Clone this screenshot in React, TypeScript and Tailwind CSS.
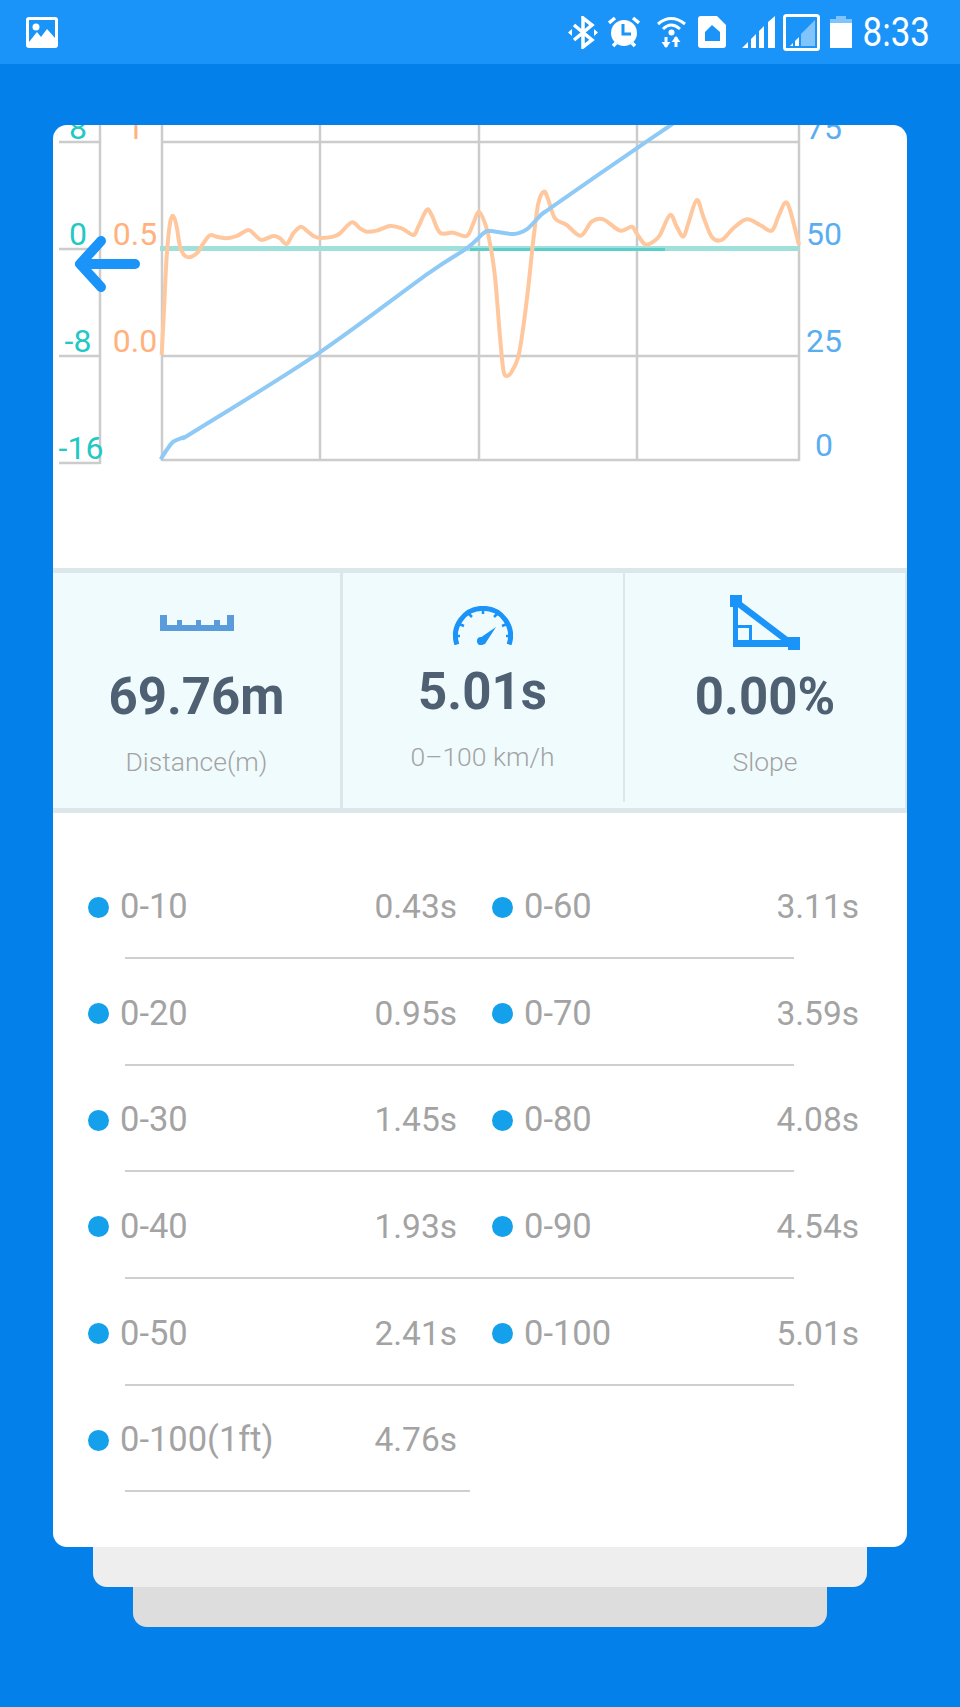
import React from "react";

const BLUE = "#1a94f8";

const rows = [
  [{ label: "0-10", value: "0.43s" }, { label: "0-60", value: "3.11s" }],
  [{ label: "0-20", value: "0.95s" }, { label: "0-70", value: "3.59s" }],
  [{ label: "0-30", value: "1.45s" }, { label: "0-80", value: "4.08s" }],
  [{ label: "0-40", value: "1.93s" }, { label: "0-90", value: "4.54s" }],
  [{ label: "0-50", value: "2.41s" }, { label: "0-100", value: "5.01s" }],
  [{ label: "0-100(1ft)", value: "4.76s" }],
];

// curve points read off the chart, [x, y] in page pixels
const orange: number[][] = [
  [365, 735], [372, 600], [380, 440], [390, 340], [400, 318], [410, 350], [420, 410], [432, 435],
  [445, 442], [460, 437], [475, 425], [490, 400], [510, 376], [530, 380], [560, 385], [590, 378],
  [625, 360], [645, 375], [665, 390], [700, 378], [720, 385], [740, 402], [760, 370], [782, 350],
  [800, 362], [820, 378], [840, 384], [880, 380], [900, 370], [935, 337], [960, 355], [980, 365],
  [1010, 362], [1050, 348], [1085, 355], [1120, 375], [1135, 350], [1160, 300], [1175, 315],
  [1200, 368], [1240, 368], [1280, 378], [1300, 340],
].map(([x, y]) => [40 + x / 3, 110 + y / 3]).concat(
  [
    [56, 305], [75, 340], [90, 400], [105, 500], [120, 680], [130, 780], [140, 798], [155, 785],
    [175, 740], [190, 650], [205, 530], [220, 390], [235, 280], [252, 245], [265, 270], [285, 325],
    [320, 345], [362, 377], [395, 335], [430, 328], [480, 362], [515, 350], [530, 370], [555, 403],
    [580, 395], [600, 375], [630, 315], [650, 350], [670, 380], [685, 340], [710, 270], [730, 320],
    [755, 380], [785, 390], [820, 355], [860, 328], [900, 345], [935, 362], [955, 320], [975, 278],
    [990, 300], [1017, 405],
  ].map(([x, y]) => [460 + x / 3, 110 + y / 3])
);

const blue: number[][] = [
  [362, 1048], [380, 1020], [400, 995], [430, 982], [470, 960], [835, 730], [1165, 490], [1280, 415],
  [1330, 370],
].map(([x, y]) => [40 + x / 3, 110 + y / 3]).concat(
  [
    [90, 363], [160, 372], [200, 358], [240, 318], [270, 295], [530, 115], [640, 40], [670, 18],
  ].map(([x, y]) => [460 + x / 3, 110 + y / 3])
);

function smooth(pts: number[][]) {
  let d = `M${pts[0][0]} ${pts[0][1]}`;
  for (let i = 0; i < pts.length - 1; i++) {
    const p0 = pts[i - 1] || pts[i];
    const p1 = pts[i];
    const p2 = pts[i + 1];
    const p3 = pts[i + 2] || p2;
    const c1x = p1[0] + (p2[0] - p0[0]) / 6;
    const c1y = p1[1] + (p2[1] - p0[1]) / 6;
    const c2x = p2[0] - (p3[0] - p1[0]) / 6;
    const c2y = p2[1] - (p3[1] - p1[1]) / 6;
    d += ` C${c1x} ${c1y} ${c2x} ${c2y} ${p2[0]} ${p2[1]}`;
  }
  return d;
}

function Chart() {
  const grid = "#cccccc";
  return (
    <svg viewBox="53 125 854 443" className="block h-[443px] w-[854px]" style={{ fontFamily: "Roboto, sans-serif" }}>
      {/* axes and grid */}
      <g stroke={grid} strokeWidth="2.5" fill="none">
        <path d="M100 125V464M59 142H100M59 249H100M59 356H100M59 463H100" />
        <path d="M162 125V461M320 125V461M479 125V461M637 125V461M799 125V461" />
        <path d="M162 142H799M162 249H799M162 356H799M162 460H799" />
      </g>

      <g fontSize="32" textAnchor="middle" fill="#22c8c4">
        <text x="78" y="139">8</text>
        <text x="78" y="245">0</text>
        <text x="78" y="352">-8</text>
        <text x="81" y="459">-16</text>
      </g>
      <g fontSize="32" textAnchor="middle" fill="#ffb27d">
        <text x="135" y="139">1</text>
        <text x="135" y="245">0.5</text>
        <text x="135" y="352">0.0</text>
      </g>
      <g fontSize="32" textAnchor="middle" fill="#5aaef0">
        <text x="824" y="139">75</text>
        <text x="824" y="245">50</text>
        <text x="824" y="352">25</text>
        <text x="824" y="456">0</text>
      </g>

      {/* curves */}
      <path d="M160 248.5H799" stroke="#9fe0da" strokeWidth="5" fill="none" />
      <path d="M470 249.5H665" stroke="#5ccfcd" strokeWidth="3" fill="none" />
      <path d={smooth(orange)} stroke="#ffc79e" strokeWidth="4" fill="none" strokeLinejoin="round" />
      <path d={smooth(blue)} stroke="#8ecaf5" strokeWidth="4" fill="none" strokeLinejoin="round" />
    </svg>
  );
}

function BackArrow() {
  return (
    <svg viewBox="0 0 66 56" className="absolute left-[22px] top-[111px] h-[56px] w-[66px]" fill="none" stroke={BLUE} strokeWidth="10" strokeLinecap="round" strokeLinejoin="round">
      <path d="M26 5L5 28L26 51" />
      <path d="M7 28H60" />
    </svg>
  );
}

function RulerIcon() {
  return (
    <svg viewBox="0 0 74 16" className="block h-[16px] w-[74px]" fill="#5a9bdc">
      <path d="M0 0H7V10H17V5H22V10H36V5H41V10H54V5H60V10H67V0H74V16H0Z" />
    </svg>
  );
}

function GaugeIcon() {
  return (
    <svg viewBox="0 0 60 39" className="block h-[39px] w-[60px]" fill="none" stroke={BLUE} strokeWidth="2.5">
      <path d="M3.9 38.5A27.5 27.5 0 1 1 56.1 38.5" strokeWidth="5" />
      <path d="M2 30H7M6 18L11 20M15 7L19 11M30 3V8M45 7L41 11M54 18L49 20M58 30H53" />
      <path d="M43 21L32 38L26 39L24 34Z" fill={BLUE} stroke="none" />
      <circle cx="28" cy="35" r="4" fill={BLUE} stroke="none" />
    </svg>
  );
}

function SlopeIcon() {
  return (
    <svg viewBox="0 0 70 55" className="block h-[55px] w-[70px]" fill={BLUE}>
      <rect x="0" y="0" width="12" height="12" />
      <rect x="58" y="42" width="12" height="13" />
      <rect x="3" y="8" width="5" height="44" />
      <rect x="3" y="45" width="58" height="7" />
      <path d="M9 5L63 46L59 51L5 10Z" />
      <path d="M7 30H22V45H19V33H7Z" />
    </svg>
  );
}

function Cell({ label, value, first }: { label: string; value: string; first: boolean }) {
  return (
    <div className={`flex items-center text-[#a3a3a3] ${first ? "w-[369px]" : "w-[367px]"}`}>
      <span className="h-[21px] w-[21px] shrink-0 rounded-full bg-[#14a0ea]" />
      <span className="ml-[11px] text-[34.5px]">{label}</span>
      <span className="ml-auto text-[33.5px]">{value}</span>
    </div>
  );
}

function StatusBar() {
  return (
    <div className="flex h-[64px] items-center bg-[#1a94f8] pl-[26px] pr-[30px]">
      <svg viewBox="0 0 32 31" className="h-[31px] w-[32px]">
        <rect width="32" height="31" rx="3" fill="#fff" />
        <rect x="3" y="3" width="26" height="25" fill={BLUE} />
        <circle cx="10" cy="10" r="3.5" fill="#fff" />
        <path d="M3 25L11 15L15 20L21 12L29 21V28H3Z" fill="#fff" />
      </svg>

      <svg viewBox="0 0 30 33" className="ml-auto h-[33px] w-[30px]" fill="none" stroke="#fff" strokeWidth="3.5">
        <path d="M6 9L24 24L15 31V2L24 9L6 24" />
        <path d="M0 16.5L4 13V20Z M30 16.5L26 13V20Z" fill="#fff" stroke="none" />
      </svg>

      <svg viewBox="0 0 32 32" className="ml-[10px] h-[32px] w-[32px]">
        <circle cx="16" cy="17" r="13" fill="#fff" />
        <path d="M15 8V18H23" stroke={BLUE} strokeWidth="3" fill="none" />
        <path d="M1 7L7 2M31 7L25 2M5 30L8 27M27 30L24 27" stroke="#fff" strokeWidth="3.5" fill="none" />
      </svg>

      <svg viewBox="0 0 29 33" className="ml-[17px] h-[33px] w-[29px]" fill="none" stroke="#fff" strokeWidth="3">
        <path d="M1 8Q14 -3 28 8M6 13Q14 5 23 13" />
        <circle cx="14.5" cy="16.5" r="3" fill="#fff" stroke="none" />
        <path d="M9 21V31M19 21V31" />
        <path d="M4.5 26H13.5L9 32Z M14.5 26H23.5L19 20Z" fill="#fff" stroke="none" />
      </svg>

      <svg viewBox="0 0 28 32" className="ml-[12px] h-[32px] w-[28px]">
        <path d="M3 0H19L28 9V29Q28 32 25 32H3Q0 32 0 29V3Q0 0 3 0Z" fill="#fff" />
        <path d="M14 9L22 16V25H7V16Z" fill={BLUE} />
      </svg>

      <svg viewBox="0 0 33 32" className="ml-[16px] h-[32px] w-[33px]" fill="#fff">
        <path d="M0 32L6 26V32ZM9 23L14 18V32H9ZM17 15L22 10V32H17ZM26 6L33 0V32H26Z" />
      </svg>

      <svg viewBox="0 0 37 37" className="ml-[8px] h-[37px] w-[37px]">
        <rect x="1.5" y="1.5" width="34" height="34" rx="2" fill="none" stroke="#fff" strokeWidth="3" />
        <path d="M18 20L32 6V32H18Z" fill="#fff" fillOpacity="0.45" />
        <path d="M7 32L10 29V32ZM12 27L16 23V32H12Z" fill="#fff" />
      </svg>

      <svg viewBox="0 0 22 32" className="ml-[10px] h-[32px] w-[22px]">
        <path d="M6 0H16V3H22V7H0V3H6Z" fill="#fff" fillOpacity="0.45" />
        <rect x="0" y="7" width="22" height="25" fill="#fff" />
      </svg>

      <span className="ml-[11px] scale-y-[1.15] text-[35px] font-normal leading-none text-white">8:33</span>
    </div>
  );
}

function Stats() {
  const valueCls = "text-[51px] font-bold leading-[60px] text-[#4f6073]";
  const labelCls = "mt-[17px] text-[26.5px] font-light leading-[36px] text-[#a3a3a3]";
  return (
    <div className="flex h-[245px] border-y-[5px] border-[#dce7ec] bg-[#f0fbfd]">
      <div className="flex w-[290px] flex-col items-center border-r-[3px] border-[#dce7ec] pt-[42px]">
        <RulerIcon />
        <div className={`mt-[36px] ${valueCls}`}>69.76m</div>
        <div className={labelCls}>Distance(m)</div>
      </div>
      <div className="relative flex w-[282px] flex-col items-center pr-[3px] pt-[33px]">
        <GaugeIcon />
        <div className={`mt-[17px] ${valueCls}`}>5.01s</div>
        <div className={labelCls}>0–100 km/h</div>
        <span className="absolute right-0 top-0 h-[229px] w-[2px] bg-[#dce7ec]" />
      </div>
      <div className="flex flex-1 flex-col items-center border-r-[2px] border-[#dce7ec] pt-[22px]">
        <SlopeIcon />
        <div className={`mt-[17px] ${valueCls}`}>0.00%</div>
        <div className={labelCls}>Slope</div>
      </div>
    </div>
  );
}

export default function App() {
  return (
    <div className="min-h-[1707px] bg-[#0480ea] [font-family:Roboto,sans-serif]">
      <StatusBar />

      <div className="pt-[61px]">
        <div className="relative z-20 mx-[53px] overflow-hidden rounded-[14px] bg-white">
          <Chart />
          <BackArrow />
          <Stats />

          <div className="pb-[55px] pl-[35px] pt-[39px]">
            {rows.map((row, i) => (
              <div key={i} className="h-[106.67px]">
                <div className="flex h-[105px] items-center gap-[35px] pt-[5px]">
                  {row.map((cell, j) => (
                    <Cell key={cell.label} label={cell.label} value={cell.value} first={j === 0} />
                  ))}
                </div>
                <div className={`ml-[37px] h-[2px] bg-[#cfcfcf] ${row.length > 1 ? "w-[669px]" : "w-[345px]"}`} />
              </div>
            ))}
          </div>
        </div>

        <div className="relative z-10 mx-[93px] h-[40px] rounded-b-[14px] bg-[#eeeeee]" />
        <div className="mx-[133px] h-[40px] rounded-b-[14px] bg-[#dddddd]" />
      </div>
    </div>
  );
}
